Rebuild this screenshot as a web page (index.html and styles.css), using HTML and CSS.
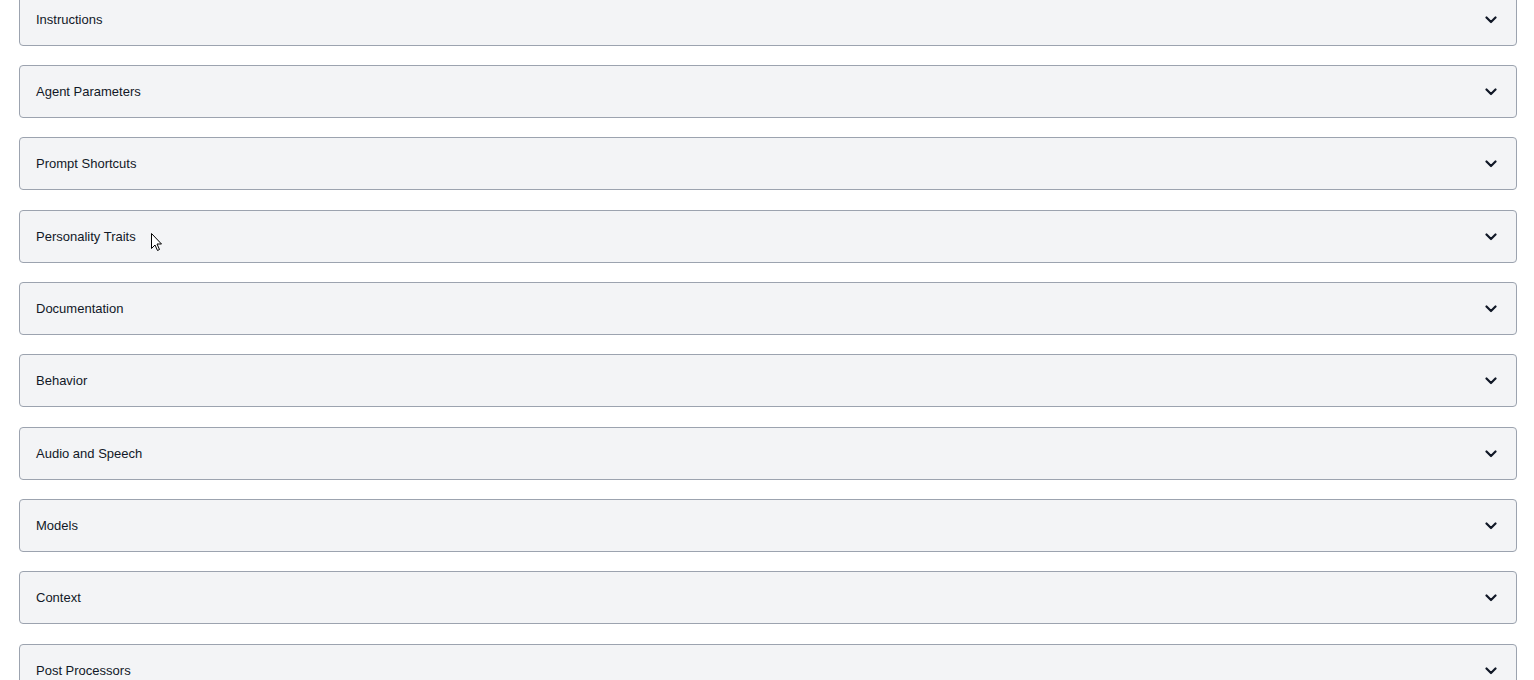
FILE: index.html
```html
<!DOCTYPE html>
<html>
<head>
<meta charset="utf-8">
<link rel="stylesheet" href="styles.css">
</head>
<body>
<div class="list">
  <div class="item"><span class="label">Instructions</span><svg class="chev" viewBox="0 0 12 8"><path d="M1.5 1.5 L6 6 L10.5 1.5"/></svg></div>
  <div class="item"><span class="label">Agent Parameters</span><svg class="chev" viewBox="0 0 12 8"><path d="M1.5 1.5 L6 6 L10.5 1.5"/></svg></div>
  <div class="item"><span class="label">Prompt Shortcuts</span><svg class="chev" viewBox="0 0 12 8"><path d="M1.5 1.5 L6 6 L10.5 1.5"/></svg></div>
  <div class="item"><span class="label">Personality Traits</span><svg class="chev" viewBox="0 0 12 8"><path d="M1.5 1.5 L6 6 L10.5 1.5"/></svg></div>
  <div class="item"><span class="label">Documentation</span><svg class="chev" viewBox="0 0 12 8"><path d="M1.5 1.5 L6 6 L10.5 1.5"/></svg></div>
  <div class="item"><span class="label">Behavior</span><svg class="chev" viewBox="0 0 12 8"><path d="M1.5 1.5 L6 6 L10.5 1.5"/></svg></div>
  <div class="item"><span class="label">Audio and Speech</span><svg class="chev" viewBox="0 0 12 8"><path d="M1.5 1.5 L6 6 L10.5 1.5"/></svg></div>
  <div class="item"><span class="label">Models</span><svg class="chev" viewBox="0 0 12 8"><path d="M1.5 1.5 L6 6 L10.5 1.5"/></svg></div>
  <div class="item"><span class="label">Context</span><svg class="chev" viewBox="0 0 12 8"><path d="M1.5 1.5 L6 6 L10.5 1.5"/></svg></div>
  <div class="item"><span class="label">Post Processors</span><svg class="chev" viewBox="0 0 12 8"><path d="M1.5 1.5 L6 6 L10.5 1.5"/></svg></div>
</div>
<svg class="cursor" viewBox="0 0 12 19" width="12" height="19"><path d="M0.5 0.5 L0.5 15.5 L4 12 L6.5 17.5 L8.5 16.5 L6 11 L10.5 11 Z"/></svg>
</body>
</html>
```

FILE: styles.css
```css
html, body {
  margin: 0;
  padding: 0;
  background: #ffffff;
  overflow: hidden;
}
body {
  font-family: "Liberation Sans", Arial, sans-serif;
  font-size: 13px;
  color: #111827;
  position: relative;
  height: 680px;
}
.list {
  display: flex;
  flex-direction: column;
  gap: 19.35px;
  padding: 0 17px 0 19px;
  margin-top: -7.3px;
}
.item {
  box-sizing: border-box;
  height: 53px;
  display: flex;
  align-items: center;
  justify-content: space-between;
  padding: 1px 19px 0 16px;
  background: #f3f4f6;
  border: 1px solid #9ca3af;
  border-radius: 4px;
}
.label {
  line-height: 16px;
}
.chev {
  width: 12px;
  height: 8px;
  fill: none;
  stroke: #111827;
  stroke-width: 2.2;
  stroke-linecap: round;
  stroke-linejoin: round;
}
.cursor {
  position: absolute;
  left: 151px;
  top: 233px;
  fill: #ffffff;
  stroke: #000000;
  stroke-width: 1;
  stroke-linejoin: miter;
}
```
